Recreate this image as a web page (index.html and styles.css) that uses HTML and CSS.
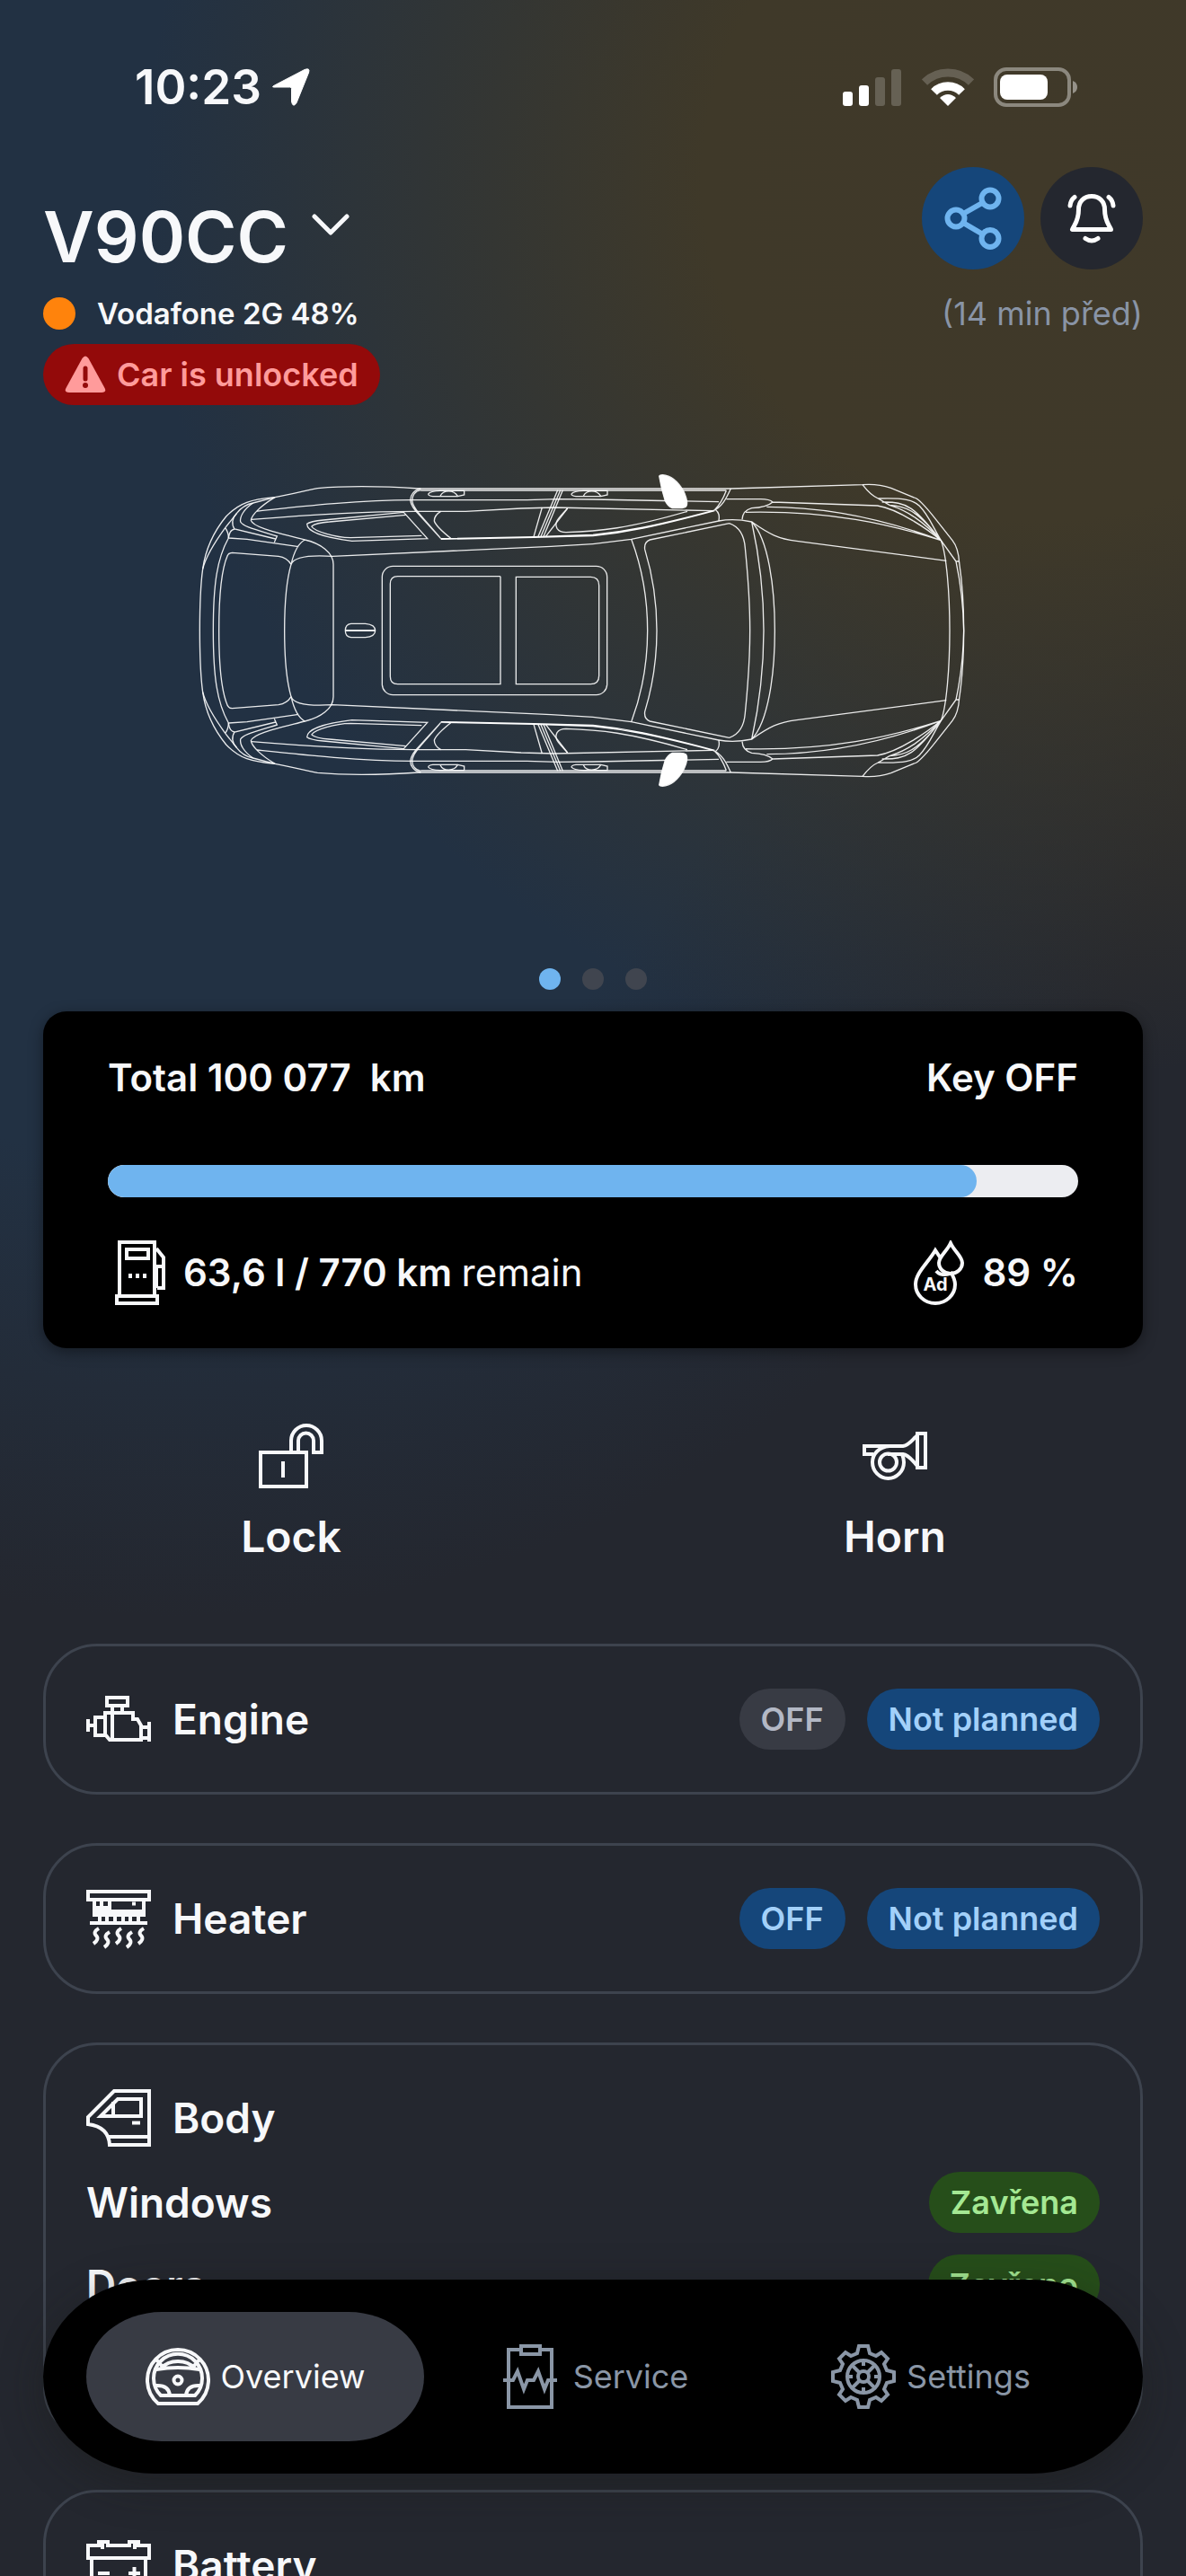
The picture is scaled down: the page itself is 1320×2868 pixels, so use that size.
FILE: index.html
```html
<!DOCTYPE html>
<html lang="en">
<head>
<meta charset="utf-8">
<meta name="viewport" content="width=device-width, initial-scale=1">
<title>V90CC</title>
<link rel="stylesheet" href="styles.css">
</head>
<body>
<div class="app">
  <div class="status-bar">
    <div class="status-left">
      <span class="clock">10:23</span>
      <svg class="location" viewBox="0 0 42 42" width="42" height="42" aria-hidden="true"><path d="M2.500 19 36 1.500Q42.500-1 40.500 5L27 38.500Q23 44.500 21.500 37V22.500Q21.500 21 19.500 21H5Q-2.500 21.500 2.500 19Z" fill="#fff" stroke="#fff" stroke-linejoin="round"/></svg>
    </div>
    <div class="status-right">
      <svg viewBox="0 0 66 44" width="66" height="44" aria-hidden="true" fill="#fff"><rect y="27" width="11" height="16" rx="3"/><rect x="18" y="20" width="11" height="23" rx="3"/><g opacity=".2"><rect x="36" y="11" width="11" height="32" rx="3"/><rect x="54" y="2" width="11" height="41" rx="3"/></g></svg>
      <svg viewBox="0 0 58 44" width="58" height="44" aria-hidden="true" fill="none" stroke="#fff"><path d="M3 16.500A37.500 37.500 0 0 1 55 16.500" stroke-width="9" opacity=".2"/><path d="M13.500 27.500A22 22 0 0 1 44.500 27.500" stroke-width="9.500"/><path d="M29 43 20 34Q29 26 38 34Z" fill="#fff" stroke="none"/></svg>
      <svg viewBox="0 0 94 44" width="94" height="44" aria-hidden="true"><rect x="2" y="2" width="82" height="40" rx="12" fill="none" stroke="#fff" stroke-opacity=".4" stroke-width="4"/><rect x="7" y="8" width="53" height="28" rx="8" fill="#fff"/><path d="M88 15Q93 17 93 22T88 29Z" fill="#fff" opacity=".45"/></svg>
    </div>
  </div>

  <main class="content">
    <header class="header">
      <div class="header-top">
        <h1 class="title"><button class="car-select" type="button">V90CC
          <svg viewBox="0 0 42 60" width="42" height="60" aria-hidden="true"><path d="M3 7 21 25 39 7" fill="none" stroke="#f7f8fa" stroke-width="5" stroke-linecap="round" stroke-linejoin="round"/></svg>
        </button></h1>
        <div class="header-actions">
          <button class="round round-blue" type="button" aria-label="Share">
            <svg viewBox="0 0 114 114" width="114" height="114" fill="none" stroke="#6fb4ef" stroke-width="6"><circle cx="38" cy="57" r="9.500"/><circle cx="76" cy="35" r="9.500"/><circle cx="76" cy="79.500" r="9.500"/><path d="M46 52 68 39.500M46 62 68 75"/></svg>
          </button>
          <button class="round round-dark" type="button" aria-label="Notifications">
            <svg viewBox="0 0 114 114" width="114" height="114" fill="none" stroke="#fff" stroke-width="5" stroke-linecap="round" stroke-linejoin="round"><path d="M57 32.500C48 32.500 42.500 39 42.500 47 42.500 60 38 64 35.500 69.500H78.500C76 64 71.500 60 71.500 47 71.500 39 66 32.500 57 32.500Z"/><path d="M50 79.500Q57 84.500 64 79.500M38 33.500Q33.500 37 33 43M76 33.500Q80.500 37 81 43"/></svg>
          </button>
        </div>
      </div>
      <div class="connection">
        <span class="signal-dot"></span>
        <span class="operator">Vodafone 2G 48%</span>
        <span class="ago">(14 min před)</span>
      </div>
      <div class="alert">
        <svg viewBox="0 0 46 42" width="46" height="42" aria-hidden="true"><path d="M19.500 3Q23 -2 26.500 3L44.500 36Q47 41 41 41H5Q-1 41 1.500 36Z" fill="#ff9b9b"/><path d="M23 14V26" stroke="#930a0a" stroke-width="5" stroke-linecap="round"/><circle cx="23" cy="33" r="3" fill="#930a0a"/></svg>
        <span>Car is unlocked</span>
      </div>
    </header>

    <svg class="car" viewBox="0 0 2760 1200" role="img" aria-label="Car seen from above" fill="none" stroke="#fff" stroke-opacity=".9" stroke-width="4">
      <defs>
        <g id="car-half">
          <path d="M67 606C67 520 70 450 77 400C86 335 110 280 155 225C200 178 240 168 318 161C380 150 430 136 460 131C560 122 680 124 800 132H1840L2280 119Q2330 115 2375 130L2460 165Q2480 178 2525 235L2580 305Q2600 330 2603 380C2612 440 2618 520 2618 606"/>
          <path d="M2603 375H2592L2542 305M2592 375C2608 450 2617 540 2618 606"/>
          <path d="M77 400C90 350 125 300 152 263L190 215C205 195 225 184 245 180L318 161M112 606C112 450 125 365 163 297Q163 278 152 263"/>
          <path d="M131 606C131 480 140 400 160 355Q165 346 175 346L330 358Q358 362 372 385C356 440 350 520 350 606"/>
          <path d="M163 297 225 301 397 326M163 297Q166 270 183 267M372 385C380 350 395 315 418 303M372 385C380 362 430 353 510 358L1240 325 1380 317"/>
          <path d="M318 161C270 190 240 220 238 238C245 262 330 280 418 303C470 315 513 345 513 385V606"/>
          <path d="M245 180C215 200 200 225 203 243C212 258 240 265 325 291L316 311 M320 300 183 267C172 250 175 230 190 215"/>
          <path d="M258 207C400 192 600 170 775 170H1160L1260 167 1380 168 1800 176M240 235C400 222 600 208 785 208H955L1140 198 1250 195 1780 206"/>
          <path d="M425 250C435 242 450 240 480 237L748 211 827 299 575 307C500 298 425 280 425 250Z"/>
          <path d="M440 258C450 250 470 245 500 243L755 220M440 258C450 275 520 295 570 296L808 289"/>
          <path d="M805 132C782 135 770 155 770 170C772 190 785 205 800 220L872 299M805 137C785 140 776 156 776 172C778 190 790 205 805 222L868 294M805 138H1825"/>
          <path d="M872 208Q850 220 850 240Q855 258 905 298"/>
          <path d="M872 299 1000 297 1182 293 1380 286C1490 275 1580 258 1780 206M872 301 1182 295 1380 290C1490 279 1580 261 1786 206" stroke-opacity="1"/>
          <path d="M1210 195 1182 293M1262 137 1197 292M1271 137 1206 292M1279 137 1215 292M1295 198 1222 292"/>
          <path d="M1295 198C1260 235 1250 245 1260 265Q1268 278 1290 278C1400 275 1500 265 1695 208"/>
          <g id="handle"><path d="M830 150Q836 140 870 139H950V153L928 158H845Q830 156 830 150ZM870 157C880 135 915 135 928 157"/></g>
          <use href="#handle" x="478"/>
          <path d="M1380 317 1508 301 1800 240Q1850 230 1910 243C1970 285 2000 300 2060 307L2560 373"/>
          <path d="M1840 132C1825 165 1810 195 1780 206M1825 139C1815 165 1800 190 1786 203M1790 203Q1805 215 1800 240"/>
          <path d="M1825 167H1940Q1970 167 1980 177Q1960 195 1910 197Q1880 205 1878 235M1980 177 2330 189C2400 200 2500 270 2542 305M1960 193C2170 193 2370 240 2542 305M1890 211C2170 205 2370 250 2542 305"/>
          <path d="M2280 119C2300 145 2320 160 2332 165C2420 162 2450 170 2470 190C2500 220 2515 260 2542 305M2332 165 2370 187C2430 205 2480 240 2542 305M2345 177C2430 175 2455 195 2542 305M2370 187C2420 190 2460 200 2542 305M2542 305C2560 350 2571 480 2571 606"/>
          <path d="M1508 301C1545 400 1562 500 1562 606M1835 248 1570 303Q1550 310 1553 335C1582 430 1593 520 1593 606M1835 248C1870 260 1885 290 1888 330C1898 430 1904 520 1904 606M1910 243C1938 370 1950 490 1950 606M1910 243C1965 300 1987 460 1987 606"/>
          <path d="M1601 90Q1603 86 1612 86C1640 88 1665 110 1682 140C1692 160 1696 180 1692 190Q1690 196 1670 197H1645Q1628 190 1620 170C1612 145 1606 120 1601 90Z" fill="#fff"/>
        </g>
      </defs>
      <use href="#car-half"/>
      <use href="#car-half" transform="translate(0 1212) scale(1 -1)"/>
      <rect x="676" y="391" width="751" height="430" rx="36"/>
      <path d="M1071 427V785H728Q703 785 703 760V450Q703 425 728 425H1069ZM1123 427V785H1372Q1400 785 1400 757V455Q1400 427 1372 427Z"/>
      <path d="M572 583H620Q653 586 653 606T620 629H572Q553 627 553 606T572 583Z"/><path d="M553 606H653" stroke-width="6"/>
    </svg>

    <div class="pager" role="group" aria-label="Slides">
      <button class="pager-dot pager-dot-active" type="button" aria-label="1"></button>
      <button class="pager-dot" type="button" aria-label="2"></button>
      <button class="pager-dot" type="button" aria-label="3"></button>
    </div>

    <section class="summary">
      <div class="summary-row">
        <span class="mileage">Total 100 077  km</span>
        <span>Key OFF</span>
      </div>
      <progress class="fuel-bar" max="1080" value="967" aria-label="Fuel"></progress>
      <div class="summary-row">
        <div class="metric">
          <svg class="icon" viewBox="0 0 72 72" aria-hidden="true"><path d="M13 61V2H52V61M10 62H55V70H10ZM21 10H45V20H21ZM54 9 62 19V53H55M62 29H54V53"/><path d="M23 39.500H27M31 39.500H35M39 39.500H43" stroke-width="5"/></svg>
          <span>63,6 l / 770 km <span class="light">remain</span></span>
        </div>
        <div class="metric">
          <svg class="icon icon-round" viewBox="0 0 72 72" aria-hidden="true"><path d="M33 34C36 38 42 39 48 37M38 20 32 11C24 25 10 36 10 49A22 21 0 0 0 54 49C54 44 52 40 49 35"/><path d="M49 3C45 12 36 18 36 25A13 12 0 0 0 62 25C62 18 53 12 49 3Z"/><text x="32" y="56" text-anchor="middle" class="icon-text">Ad</text></svg>
          <span>89 %</span>
        </div>
      </div>
    </section>

    <div class="actions">
      <button class="action" type="button">
        <svg class="icon" viewBox="0 0 72 72" aria-hidden="true"><path d="M2 32H53V70H2ZM27 42V60M36 31V19A17 17 0 0 1 70 19V32H61V19A8.500 8.500 0 0 0 44 19V31"/></svg>
        Lock
      </button>
      <button class="action" type="button">
        <svg class="icon" viewBox="0 0 72 72" aria-hidden="true"><path d="M12 34H2V25H45C52 24 56 17 61 13M28 34H45C52 35 56 42 61 47M61 11H70V49H61Z"/><path d="M30 25C18 26 11 34 11 43A17.500 18 0 0 0 46 43Q46 39 44 34"/><circle cx="28.500" cy="43" r="9.500"/></svg>
        Horn
      </button>
    </div>

    <section class="cards">
      <article class="card">
        <div class="card-head">
          <svg class="icon" viewBox="0 0 72 72" aria-hidden="true"><path d="M23 12H46V21H23ZM29 21V61M40 21V28M21 29H52V36H57L61 43V59H26L21 53ZM21 34H10V54H21M2 36V50M2 43H10M70 39V61M61 45H70M61 57H70"/></svg>
          <h2>Engine</h2>
          <button class="chip chip-grey" type="button">OFF</button>
          <button class="chip chip-blue" type="button">Not planned</button>
        </div>
      </article>
      <article class="card">
        <div class="card-head">
          <svg class="icon" viewBox="0 0 72 72" aria-hidden="true"><path d="M2 6H70V15H2ZM9 15V32H64V15M9 24H26V15M17 15V24M9 28H64M4 41H68M15 32V41M23 32V41M32 32V41M41 32V41M49 32V41M58 32V41M51 19.500H55"/><path d="M14 47Q7 51 11 55T8 64M26 51Q19 55 23 59T20 68M39 47Q32 51 36 55T33 64M51 51Q44 55 48 59T45 68M64 47Q57 51 61 55T58 64"/></svg>
          <h2>Heater</h2>
          <button class="chip chip-blue" type="button">OFF</button>
          <button class="chip chip-blue" type="button">Not planned</button>
        </div>
      </article>
      <article class="card card-body">
        <div class="card-head">
          <svg class="icon" viewBox="0 0 72 72" aria-hidden="true"><path d="M31 6H70V66H26Q25 46 2 43V35ZM35 15H61V34H16ZM30 18V34M51 41.500H60M25 57H70"/></svg>
          <h2>Body</h2>
        </div>
        <div class="card-row"><h3>Windows</h3><span class="chip chip-green">Zavřena</span></div>
        <div class="card-row"><h3>Doors</h3><span class="chip chip-green">Zavřeno</span></div>
      </article>
      <article class="card">
        <div class="card-head">
          <svg class="icon" viewBox="0 0 72 72" aria-hidden="true"><path d="M2 14H14V10H24V14H48V10H58V14H70V28H2ZM18 10V18M54 10V18M6 28V64H66V28M13 45H26M47 45H60M53.500 38V52"/></svg>
          <h2>Battery</h2>
        </div>
      </article>
    </section>
  </main>

  <nav class="tabs" aria-label="Main">
    <a class="tab tab-active" href="#overview" aria-current="page">
      <svg class="icon" viewBox="0 0 72 72" aria-hidden="true"><path d="M14 66A34 34 0 1 1 58 66ZM17 57A27 27 0 1 1 55 57ZM12 28Q36 24 60 28M17 27Q24 19 36 19T55 27M12 17 18 24M60 17 54 24M11 46Q26 45 27 57M61 46Q46 45 45 57"/><circle cx="36" cy="40" r="4.500"/></svg>
      Overview
    </a>
    <a class="tab" href="#service">
      <svg class="icon" viewBox="0 0 72 72" aria-hidden="true"><path d="M24 6H12V70H60V6H49M26 2H47V11H26ZM6 40H17L22 30 29 50 33 40H40L45 30 52 50 56 40H66"/></svg>
      Service
    </a>
    <a class="tab" href="#settings">
      <svg class="icon" viewBox="0 0 72 72" aria-hidden="true"><path d="M31 2H41L43 10 50 13 56 9 63 16 59 22 62 29 70 31V41L62 43 59 50 63 56 56 63 50 59 43 62 41 70H31L29 62 22 59 16 63 9 56 13 50 10 43 2 41V31L10 29 13 22 9 16 16 9 22 13 29 10Z"/><circle cx="36" cy="36" r="18"/><circle cx="36" cy="36" r="6"/><path d="M32 32 23 23M40 32 49 23M32 40 23 49M40 40 49 49M36 18V24M36 48V54M18 36H24M48 36H54"/></svg>
      Settings
    </a>
  </nav>
</div>
</body>
</html>
```
FILE: styles.css
```css
* { box-sizing: border-box; }

body {
  margin: 0;
  background: #24272f;
  color: #f7f8fa;
  font-family: Inter, "Liberation Sans", sans-serif;
}

h1, h2, h3 { margin: 0; font-weight: 600; }

button {
  margin: 0;
  padding: 0;
  border: 0;
  background: none;
  color: inherit;
  font: inherit;
}

svg { display: block; flex: none; }

.app {
  position: relative;
  height: 100vh;
  overflow: hidden;
  background:
    radial-gradient(circle 1000px at 88% 200px, #403929 0%, #3f3929 38%, rgba(63, 57, 41, 0) 100%),
    radial-gradient(1150px 1200px at 15% 600px, #223143 0%, #223143 58%, rgba(34, 49, 67, 0) 100%),
    #24272f;
}

/* Status bar */
.status-bar {
  display: flex;
  justify-content: space-between;
  align-items: center;
  height: 186px;
  padding: 8px 120px 0 150px;
}

.status-left { display: flex; align-items: center; gap: 12px; }
.status-right { display: flex; align-items: center; gap: 22px; }
.clock { font-size: 53px; font-weight: 600; line-height: 64px; }

.content { padding: 0 48px; }

/* Header */
.header-top { display: flex; justify-content: space-between; align-items: flex-start; }
.title { padding-top: 30px; font-size: 78px; line-height: 96px; }
.car-select { display: flex; align-items: center; gap: 26px; }
.header-actions { display: flex; gap: 18px; }
.round { width: 114px; height: 114px; border-radius: 50%; }
.round-blue { background: #15467a; }
.round-dark { background: #24272f; }

.connection {
  display: flex;
  align-items: center;
  margin-top: 13px;
  line-height: 48px;
}
.signal-dot { width: 36px; height: 36px; border-radius: 50%; background: #ff830c; }
.operator { margin-left: 24px; font-size: 33px; font-weight: 600; }
.ago { margin-left: auto; color: #8994a6; font-size: 36px; }

.alert {
  display: inline-flex;
  align-items: center;
  gap: 12px;
  height: 68px;
  margin-top: 10px;
  padding: 0 24px;
  border-radius: 34px;
  background: #930a0a;
  color: #ff9b9b;
  font-size: 36px;
  font-weight: 600;
}

.car { width: 920px; max-width: 100%; margin: 49px auto 0; }

.pager { display: flex; justify-content: center; gap: 24px; margin-top: 178px; }
.pager-dot { width: 24px; height: 24px; border-radius: 50%; background: #40454f; }
.pager-dot-active { background: #6fb4ef; }

/* Summary */
.summary {
  margin-top: 24px;
  padding: 48px 72px;
  border-radius: 26px;
  background: #000;
  box-shadow: 0 4px 16px rgba(0, 0, 0, .4);
  font-size: 42px;
  font-weight: 600;
  line-height: 52px;
}
.summary-row { display: flex; justify-content: space-between; }
.mileage { white-space: pre; }
.metric { display: flex; align-items: center; gap: 12px; }
.light { font-weight: 400; }

.fuel-bar {
  display: block;
  width: 100%;
  height: 36px;
  margin: 71px 0 48px;
  border: 0;
  border-radius: 18px;
  overflow: hidden;
  appearance: none;
  background: #ecedf1;
}
.fuel-bar::-webkit-progress-bar { background: #ecedf1; }
.fuel-bar::-webkit-progress-value { border-radius: 18px; background: #6fb4ef; }

.icon {
  width: 72px;
  height: 72px;
  fill: none;
  stroke: currentColor;
  stroke-width: 4;
}
.icon-text { fill: currentColor; stroke: none; font-size: 20px; font-weight: 700; }

/* Quick actions */
.actions {
  display: grid;
  grid-template-columns: 1fr 1fr;
  gap: 120px;
  margin-top: 84px;
}
.action {
  display: flex;
  flex-direction: column;
  align-items: center;
  gap: 25px;
  font-size: 48px;
  font-weight: 600;
  line-height: 58px;
}

/* Cards */
.cards { display: grid; gap: 54px; margin-top: 90px; }
.card {
  padding: 45px;
  border: 3px solid #3d434e;
  border-radius: 60px;
}
.card-body { padding-bottom: 137px; }
.card-head { display: flex; align-items: center; gap: 24px; }
.card-head h2 { margin-right: auto; }
.card h2, .card h3 { font-size: 46px; line-height: 56px; }
.card-row {
  display: flex;
  justify-content: space-between;
  align-items: center;
  margin-top: 24px;
}

.chip {
  height: 68px;
  padding: 0 24px;
  border-radius: 34px;
  font-size: 36px;
  font-weight: 600;
  line-height: 68px;
}
.chip-grey { background: #383b44; color: #b3b8c5; }
.chip-blue { background: #15467a; color: #a2d0f9; }
.chip-green { background: #264e1a; color: #a4e893; }

.tabs {
  position: absolute;
  right: 48px;
  bottom: 114px;
  left: 48px;
  display: grid;
  grid-template-columns: repeat(3, 1fr);
  padding: 36px 48px;
  border-radius: 124px / 108px;
  background: #000;
  box-shadow: 0 12px 48px rgba(24, 24, 20, .4);
}
.tab {
  display: flex;
  justify-content: center;
  align-items: center;
  gap: 12px;
  height: 144px;
  border-radius: 84px / 72px;
  color: #8a96a6;
  font-size: 36px;
  text-decoration: none;
}
.tab-active { background: #383b44; color: #f7f8fa; }
```
